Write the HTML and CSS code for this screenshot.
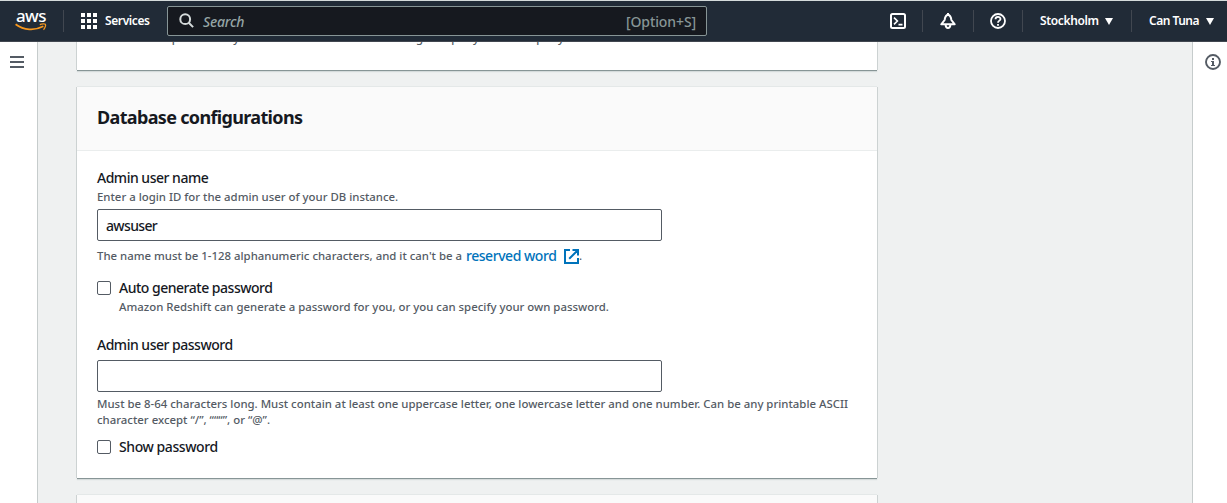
FILE: index.html
```html
<!DOCTYPE html>
<html lang="en">
<head>
<meta charset="utf-8">
<title>Create cluster</title>
<link rel="stylesheet" href="styles.css">
</head>
<body>
<header class="topbar">
  <div class="logo">
    <span class="logo-text">aws</span>
    <svg class="logo-smile" width="32" height="9" viewBox="0 0 32 9"><path d="M.6 1.2C9 7.400 19.500 8 28.400 3.300" fill="none" stroke="#f7981f" stroke-width="1.800"/><path d="M24.800 1.700c2-1 4.900-1.100 5.600-.5.5.9-.1 3.900-1.900 5.500" fill="none" stroke="#f7981f" stroke-width="1.300"/></svg>
  </div>
  <i class="sep sep-logo"></i>
  <svg class="grid" width="17" height="17" viewBox="0 0 17 17" fill="#fff"><path d="M0 0h4v4H0zM6 0h4v4H6zM12 0h4v4h-4zM0 6h4v4H0zM6 6h4v4H6zM12 6h4v4h-4zM0 12h4v4H0zM6 12h4v4H6zM12 12h4v4h-4z"/></svg>
  <span class="nav-text services">Services</span>
  <div class="search">
    <svg width="16" height="16" viewBox="0 0 16 16" fill="none" stroke="#d5dbdb" stroke-width="2"><circle cx="6.200" cy="6.200" r="4.900"/><path d="M9.700 9.700l4.400 4.400"/></svg>
    <span class="placeholder">Search</span>
    <span class="shortcut">[Option+S]</span>
  </div>
  <div class="tool tool-shell"><svg width="16" height="16" viewBox="0 0 16 16" fill="none" stroke="#fff" stroke-width="2"><rect x="1" y="1" width="14" height="14" rx="1.500"/><path d="M4 4.600L7.400 8 4 11.400M8.500 11.600h4" stroke-width="1.600"/></svg></div>
  <i class="sep"></i>
  <div class="tool tool-bell"><svg width="16" height="16" viewBox="0 0 16 16" fill="none" stroke="#fff" stroke-width="2" stroke-linejoin="round"><path d="M8 1.800C5.600 2.200 5 4.500 4.600 7L1.300 11.300h13.400L11.400 7C11 4.500 10.400 2.200 8 1.800zM5.600 12c.2 2 1.100 3 2.400 3s2.200-1 2.400-3"/><path d="M8 0v2"/></svg></div>
  <i class="sep"></i>
  <div class="tool tool-help"><svg width="16" height="16" viewBox="0 0 16 16" fill="none" stroke="#fff" stroke-width="1.800"><circle cx="8" cy="8" r="7"/><path d="M5.500 6.300C5.500 3.200 10.500 3.200 10.500 6c0 1.700-2.500 1.600-2.500 3.700M8 10.900v1.800"/></svg></div>
  <i class="sep"></i>
  <div class="menu menu-region"><span class="nav-text region">Stockholm</span><svg width="8" height="7" viewBox="0 0 8 7"><path d="M0 0h8L4 7z" fill="#fff"/></svg></div>
  <i class="sep"></i>
  <div class="menu menu-account"><span class="nav-text account">Can Tuna</span><svg width="8" height="7" viewBox="0 0 8 7"><path d="M0 0h8L4 7z" fill="#fff"/></svg></div>
</header>
<div class="shell">
  <aside class="rail rail-left"><svg width="14" height="12" viewBox="0 0 14 12" fill="#545b64"><path d="M0 0h14v2H0zM0 5h14v2H0zM0 10h14v2H0z"/></svg></aside>
  <main class="content">
    <section class="card card-prev"><p class="hint h-sample">Load sample data to your Redshift cluster to start using the query editor to query data.</p></section>
    <section class="card card-db">
      <div class="card-head"><h2>Database configurations</h2></div>
      <div class="card-body">
        <label class="label l-name">Admin user name</label>
        <p class="hint h-enter">Enter a login ID for the admin user of your DB instance.</p>
        <div class="input"><span class="value">awsuser</span></div>
        <p class="hint constraint"><span class="h-rule">The name must be 1-128 alphanumeric characters, and it can't be a</span><a class="link">reserved word</a><svg width="15" height="15" viewBox="0 0 15 15" fill="none" stroke="#0073bb" stroke-width="2"><path d="M6 1H1v13h13V9M8.500 1H14v5.500M14 1L5.200 9.800"/></svg><span>.</span></p>
        <div class="check check-auto"><i class="box"></i><label class="label l-auto">Auto generate password</label></div>
        <p class="hint h-auto">Amazon Redshift can generate a password for you, or you can specify your own password.</p>
        <label class="label l-pass">Admin user password</label>
        <div class="input"></div>
        <p class="hint h-must"><span class="m1">Must be 8-64 characters long. Must contain at least one uppercase letter, one lowercase letter and one number. Can be any printable ASCII</span><br><span class="m2">character except “/”, “““”, or “@”.</span></p>
        <div class="check"><i class="box"></i><label class="label l-show">Show password</label></div>
      </div>
    </section>
    <section class="card card-next"></section>
  </main>
  <aside class="rail rail-right"><svg width="16" height="16" viewBox="0 0 16 16"><circle cx="8" cy="8" r="7" fill="none" stroke="#545b64" stroke-width="1.900"/><path d="M7 4h2v2H7zM6 7h3v4h1v1H6v-1h1V8H6z" fill="#545b64"/></svg></aside>
</div>
</body>
</html>
```
FILE: styles.css
```css
* { box-sizing: border-box; }
body { margin: 0; height: 503px; overflow: hidden; background: #eff1f1; font-family: "Noto Sans", "Open Sans", sans-serif; font-size: 14px; color: #16191f; display: flex; flex-direction: column; }
p, h2 { margin: 0; }
svg { display: block; flex: none; }
.topbar { height: 42px; flex: none; display: flex; align-items: center; background: #212b37; border-top: 1px solid #d5dbdb; border-bottom: 1px solid #414750; white-space: nowrap; }
.logo { width: 32px; margin-left: 15px; height: 22px; display: flex; flex-direction: column; margin-top: -2px; }
.logo-text { font-size: 17px; line-height: 14px; height: 14px; font-weight: 500; color: #fff; letter-spacing: -0.6px; padding-left: 1px; }
.sep { width: 1px; height: 22px; background: #414750; flex: none; }
.sep-logo { margin-left: 16px; }
.grid { margin-left: 17px; }
.nav-text { color: #fff; font-size: 12px; font-weight: 600; line-height: 18px; }
.services { margin-left: 7px; width: 45px; letter-spacing: -0.4px; }
.search { margin-left: 17px; width: 540px; height: 30px; display: flex; align-items: center; padding: 0 10px 0 11px; background: #16191f; border: 1px solid #879596; border-radius: 2px; }
.placeholder { margin-left: 8px; color: #95a5a6; font-size: 14px; font-style: italic; font-weight: 500; letter-spacing: -0.2px; }
.shortcut { margin-left: auto; color: #879596; font-size: 14px; font-weight: 500; letter-spacing: -0.1px; }
.tool { display: flex; }
.tool-shell { margin-left: 183px; width: 32px; }
.tool-bell { padding-left: 17px; width: 50px; }
.tool-help { padding-left: 16px; width: 48px; }
.menu { display: flex; align-items: center; justify-content: space-between; }
.menu-region { margin-left: 17px; width: 73px; margin-right: 18px; }
.menu-account { margin-left: 17px; width: 65px; }
.region { letter-spacing: -0.35px; }
.account { letter-spacing: -0.5px; }
.shell { flex: 1; min-height: 0; display: flex; }
.rail { background: #fff; flex: none; }
.rail-left { width: 38px; border-right: 1px solid #c6cccc; padding: 14px 0 0 10px; }
.rail-right { width: 35px; border-left: 1px solid #c6cccc; padding: 12px 0 0 12px; margin-left: auto; }
.content { width: 800px; margin-left: 39px; }
.card { background: #fff; box-shadow: 0 1px 0 0 #879596, -1px 0 0 0 #ccd2d2, 1px 0 0 0 #ccd2d2, 0 -1px 0 0 #e4e8e8, 0 2px 1px 0 #d5dbdb; }
.card-prev { height: 28px; padding-left: 42px; clip-path: inset(0 -3px -3px -3px); }
.card-prev .hint { position: relative; top: -12px; letter-spacing: 0.03px; }
.card-db { height: 391px; margin-top: 17px; }
.card-head { height: 64px; background: #fafafa; border-bottom: 1px solid #eaeded; padding: 17px 20px 0; }
h2 { font-size: 18px; line-height: 26px; font-weight: 700; letter-spacing: -0.66px; white-space: nowrap; }
.card-body { padding: 17px 20px 0; }
.label { display: block; font-size: 14px; line-height: 20px; font-weight: 500; letter-spacing: -0.49px; white-space: nowrap; }
.hint { color: #545b64; font-size: 11.4px; line-height: 16px; font-weight: 500; white-space: nowrap; }
.h-enter { margin-top: 1px; }
.input { width: 565px; height: 32px; border: 1px solid #545b64; border-radius: 2px; padding: 6px 8px; margin-top: 4px; background: #fff; }
.value { display: block; line-height: 20px; font-weight: 500; letter-spacing: -0.65px; }
.constraint { display: flex; align-items: center; height: 20px; margin-top: 5px; }
.h-rule { width: 369px; }
.link { color: #0073bb; font-size: 14px; width: 98px; letter-spacing: -0.46px; }
.check { display: flex; align-items: center; }
.box { width: 14px; height: 14px; border: 1px solid #545b64; border-radius: 2px; margin-right: 8px; }
.check-auto { margin-top: 12px; }
.h-auto { padding-left: 22px; margin-top: 1px; }
.l-pass { margin-top: 20px; }
.l-pass + .input { margin-top: 5px; }
.l-show { letter-spacing: -0.42px; }
.h-must { margin: 4px 0 9px; }
.card-next { height: 30px; margin-top: 17px; background: #fafafa; }
```
